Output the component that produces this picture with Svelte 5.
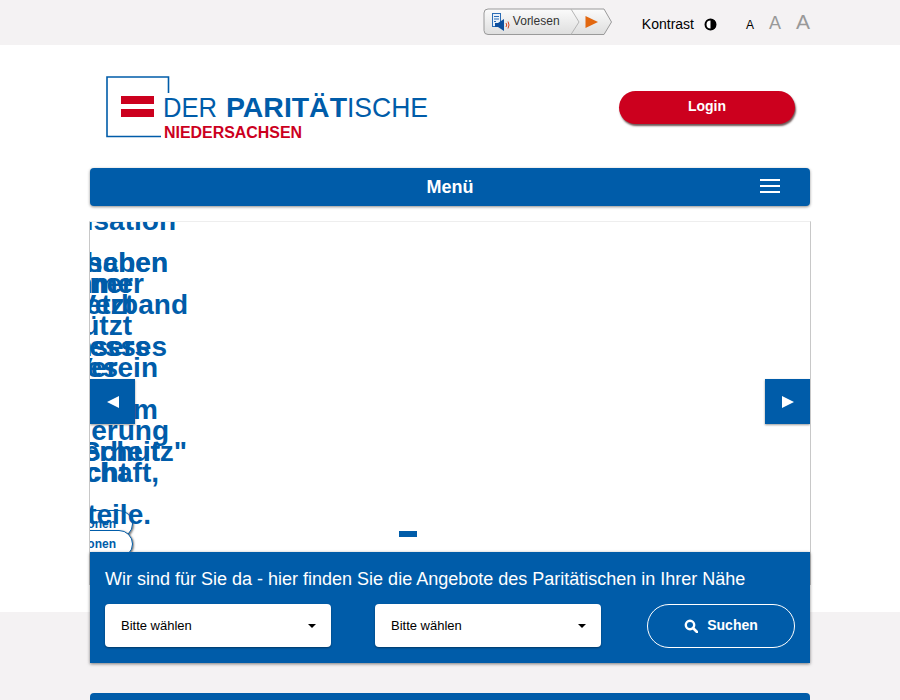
<script lang="ts">
	// overlapping carousel slides, clipped at the left edge of the stage
	const slides = [
		{ lines: [
			{ text: 'Organisation', end: 86 },
			{ text: 'Menschen', end: 78 },
			{ text: 'Verband', end: 98 },
			{ text: 'Interesses', end: 77 },
			{ text: '', end: 0 },
			{ text: 'Förderung', end: 79 },
			{ text: 'Gemeinschaft,', end: 69 },
			{ text: 'Anteile.', end: 61 }
		], top: -22 },
		{ lines: [
			{ text: 'haben', end: 78 },
			{ text: 'setzt', end: 44 },
			{ text: 'unsers', end: 60 },
			{ text: '', end: 0 },
			{ text: '', end: 0 },
			{ text: 'Macht', end: 38 }
		], top: 20 },
		{ lines: [
			{ text: 'immer', end: 54 },
			{ text: 'stützt', end: 42 },
			{ text: 'Verein', end: 68 },
			{ text: 'im', end: 68 },
			{ text: 'Sicherheit', end: 70 }
		], top: 41 },
		{ lines: [
			{ text: 'Partner', end: 43 },
			{ text: '', end: 0 },
			{ text: 'dieses', end: 28 },
			{ text: '', end: 0 },
			{ text: '„Schutz"', end: 97 }
		], top: 41 }
	];
</script>

<div class="topbar">
	<div class="wrap topbar-inner">
		<div class="reader">
			<svg class="reader-bg" width="130" height="28" viewBox="0 0 130 28">
				<defs>
					<linearGradient id="rg" x1="0" y1="0" x2="0" y2="1">
						<stop offset="0" stop-color="#fbfbfb" />
						<stop offset="1" stop-color="#dedede" />
					</linearGradient>
				</defs>
				<path d="M5 1H121L128.500 14L121 26.500H5Q1 26.500 1 22.500V5Q1 1 5 1Z" fill="url(#rg)" stroke="#9a9a9a" />
				<path d="M88 1L96 14L88 26.500" fill="none" stroke="#b5b5b5" />
				<path d="M102.500 8L115 14L102.500 20Z" fill="#e2670f" />
				<rect x="9.500" y="5.500" width="8" height="13" fill="#e9f1fa" stroke="#2b6cb5" />
				<path d="M11 8.500h5M11 11h5M11 13.500h2" stroke="#2b6cb5" />
				<path d="M12 15h3l6-4v12l-6-4h-3Z" fill="#0e4f9e" />
				<path d="M23 15q1.500 2 0 4M25 13.500q2 3.500 0 7" fill="none" stroke="#d8431f" />
			</svg>
			<span class="reader-label">Vorlesen</span>
		</div>
		<div class="contrast">
			<span>Kontrast</span>
			<svg width="13" height="13" viewBox="0 0 13 13">
				<circle cx="6.500" cy="6.500" r="5" fill="#fff" stroke="#000" stroke-width="2" />
				<path d="M6.500 1a5.500 5.500 0 0 1 0 11Z" fill="#000" />
			</svg>
		</div>
		<div class="sizes">
			<span class="size-s">A</span>
			<span class="size-m">A</span>
			<span class="size-l">A</span>
		</div>
	</div>
</div>

<div class="main">
	<div class="wrap">
		<header class="header">
			<svg class="logo" width="330" height="70" viewBox="0 0 330 70">
				<path d="M62.500 17V1H1V60.500H55" fill="none" stroke="#005ca9" stroke-width="1.600" />
				<rect x="15" y="20" width="33" height="8" fill="#cc001e" />
				<rect x="15" y="33" width="33" height="8" fill="#cc001e" />
				<text x="57" y="41" class="logo-name" textLength="54" lengthAdjust="spacingAndGlyphs">DER</text>
				<text x="120" y="41" class="logo-name logo-strong" textLength="121" lengthAdjust="spacingAndGlyphs">PARITÄT</text>
				<text x="241" y="41" class="logo-name" textLength="81" lengthAdjust="spacingAndGlyphs">ISCHE</text>
				<text x="58" y="62" class="logo-region" textLength="138" lengthAdjust="spacingAndGlyphs">NIEDERSACHSEN</text>
			</svg>
			<button class="login">Login</button>
		</header>

		<nav class="menu">
			<span class="menu-title">Menü</span>
			<span class="burger"><i></i><i></i><i></i></span>
		</nav>

		<section class="stage">
			<a class="pill pill-a" href="#a">Informationen</a>
			<a class="pill pill-b" href="#b">Informationen</a>
			{#each slides as slide}
				<div class="slide" style="top: {slide.top}px">
					{#each slide.lines as line}
						<div class="slide-line" style="width: {line.end}px">{line.text}</div>
					{/each}
				</div>
			{/each}
			<button class="arrow arrow-prev" aria-label="Zurück">
				<svg width="14" height="14" viewBox="0 0 14 14"><path d="M13 1V13L1 7Z" fill="#fff" /></svg>
			</button>
			<button class="arrow arrow-next" aria-label="Weiter">
				<svg width="14" height="14" viewBox="0 0 14 14"><path d="M1 1V13L13 7Z" fill="#fff" /></svg>
			</button>
			<span class="dot"></span>
		</section>

		<section class="finder">
			<h2>Wir sind für Sie da - hier finden Sie die Angebote des Paritätischen in Ihrer Nähe</h2>
			<div class="finder-row">
				<div class="select">Bitte wählen<span class="caret"></span></div>
				<div class="select">Bitte wählen<span class="caret"></span></div>
				<button class="search">
					<svg width="14" height="14" viewBox="0 0 14 14">
						<circle cx="6" cy="6" r="4.200" fill="none" stroke="#fff" stroke-width="2.400" />
						<path d="M9 9L13 13" stroke="#fff" stroke-width="2.600" stroke-linecap="round" />
					</svg>
					<span class="search-label">Suchen</span>
				</button>
			</div>
		</section>
	</div>
</div>

<div class="lower">
	<div class="wrap">
		<div class="band"></div>
	</div>
</div>

<style>
	:global(body) {
		margin: 0;
		background: #f4f2f3;
		font-family: "Liberation Sans", Arial, sans-serif;
		overflow: hidden;
	}

	.wrap {
		width: 720px;
		margin: 0 auto;
	}

	.topbar {
		height: 45px;
		background: #f4f2f3;
		overflow: hidden;
	}

	.topbar-inner {
		display: flex;
		align-items: center;
		justify-content: flex-end;
		height: 45px;
	}

	.reader {
		position: relative;
		width: 130px;
		height: 28px;
		margin-top: -1px;
	}

	.reader-bg {
		display: block;
	}

	.reader-label {
		position: absolute;
		left: 30px;
		top: 6px;
		font-size: 12px;
		color: #333;
	}

	.contrast {
		display: flex;
		align-items: center;
		gap: 10px;
		margin-left: 29px;
		margin-top: 3px;
		font-size: 14px;
		color: #000;
	}

	.sizes {
		display: flex;
		align-items: baseline;
		gap: 11px;
		margin-left: 28px;
		width: 65px;
		color: #999;
		line-height: 1;
		margin-top: -2px;
	}

	.size-s {
		font-size: 12px;
		color: #000;
		margin-left: 1px;
		margin-right: 4px;
	}

	.size-m {
		font-size: 18px;
	}

	.size-l {
		font-size: 21px;
		margin-left: 4px;
	}

	.main {
		background: #fff;
		height: 567px;
	}

	.header {
		display: flex;
		align-items: center;
		justify-content: space-between;
		height: 123px;
		padding: 0 15px 0 16px;
		box-sizing: border-box;
	}

	.logo {
		display: block;
		margin-top: 8px;
	}

	.logo-name {
		font-size: 28px;
		fill: #005ca9;
	}

	.logo-strong {
		font-weight: 700;
	}

	.logo-region {
		font-size: 16px;
		font-weight: 700;
		fill: #cc001e;
	}

	.login {
		width: 176px;
		height: 33px;
		margin-top: 1px;
		border: 0;
		border-radius: 17px;
		background: #cc001e;
		color: #fff;
		font: 700 14px "Liberation Sans", Arial, sans-serif;
		box-shadow: 1px 2px 2px rgba(60, 30, 30, 0.75);
		padding: 0 0 2px;
	}

	.menu {
		position: relative;
		display: flex;
		align-items: center;
		justify-content: center;
		height: 38px;
		background: #005ca9;
		border-radius: 4px;
		box-shadow: 0 1px 3px rgba(0, 0, 0, 0.45);
		color: #fff;
	}

	.menu-title {
		font-size: 18px;
		font-weight: 700;
	}

	.burger {
		position: absolute;
		right: 30px;
		top: 11px;
		display: grid;
		gap: 4px;
		width: 20px;
	}

	.burger i {
		display: block;
		height: 2px;
		background: #fff;
	}

	.stage {
		position: relative;
		height: 364px;
		margin-top: 15px;
		background: #fff;
		overflow: hidden;
		border-top: 1px solid #eee;
		border-left: 1px solid #c8c8c8;
		border-right: 1px solid #c8c8c8;
		margin-left: -1px;
		margin-right: -1px;
		box-sizing: border-box;
	}

	.slide {
		position: absolute;
		left: 0;
		color: #005ca9;
		font-size: 28px;
		font-weight: 700;
		line-height: 42px;
	}

	.slide-line {
		height: 42px;
		white-space: nowrap;
		display: flex;
		justify-content: flex-end;
	}

	.pill {
		position: absolute;
		right: 677px;
		padding: 0 16px;
		border: 1px solid #005ca9;
		border-radius: 18px;
		background: #fff;
		color: #005ca9;
		font-size: 12px;
		font-weight: 700;
		line-height: 26px;
		text-decoration: none;
		white-space: nowrap;
		box-shadow: 1px 1px 2px rgba(0, 0, 0, 0.5);
	}

	.pill-a {
		top: 288px;
	}

	.pill-b {
		top: 308px;
	}

	.arrow {
		position: absolute;
		top: 157px;
		display: flex;
		align-items: center;
		justify-content: center;
		width: 45px;
		height: 45px;
		padding: 0;
		border: 0;
		background: #005ca9;
		box-shadow: 0 1px 2px rgba(0, 0, 0, 0.4);
	}

	.arrow-prev {
		left: 0;
	}

	.arrow-next {
		right: 0;
	}

	.dot {
		position: absolute;
		left: 309px;
		top: 309px;
		width: 18px;
		height: 6px;
		background: #005ca9;
	}

	.finder {
		position: relative;
		height: 111px;
		margin-top: -33px;
		padding: 15px 15px 0;
		box-sizing: border-box;
		background: #005ca9;
		box-shadow: 0 1px 3px rgba(0, 0, 0, 0.5);
	}

	h2 {
		margin: 0;
		color: #fff;
		font-size: 18px;
		font-weight: 400;
		line-height: 24px;
	}

	.finder-row {
		display: flex;
		align-items: flex-start;
		gap: 44px;
		margin-top: 13px;
	}

	.select {
		position: relative;
		width: 226px;
		height: 43px;
		padding-left: 16px;
		box-sizing: border-box;
		border-radius: 4px;
		background: #fff;
		color: #000;
		font-size: 13px;
		line-height: 43px;
		box-shadow: 0 1px 2px rgba(0, 0, 0, 0.4);
	}

	.caret {
		position: absolute;
		right: 15px;
		top: 20px;
		border: 4.500px solid transparent;
		border-top-color: #000;
		border-bottom: 0;
	}

	.search {
		display: flex;
		align-items: center;
		justify-content: center;
		gap: 9px;
		width: 148px;
		height: 44px;
		margin-left: 2px;
		border: 1px solid #fff;
		border-radius: 22px;
		background: transparent;
		color: #fff;
		font: 700 14px "Liberation Sans", Arial, sans-serif;
	}

	.search-label {
		margin-bottom: 2px;
	}

	.lower {
		padding-top: 81px;
	}

	.band {
		height: 60px;
		background: #005ca9;
		border-radius: 4px 4px 0 0;
	}
</style>
